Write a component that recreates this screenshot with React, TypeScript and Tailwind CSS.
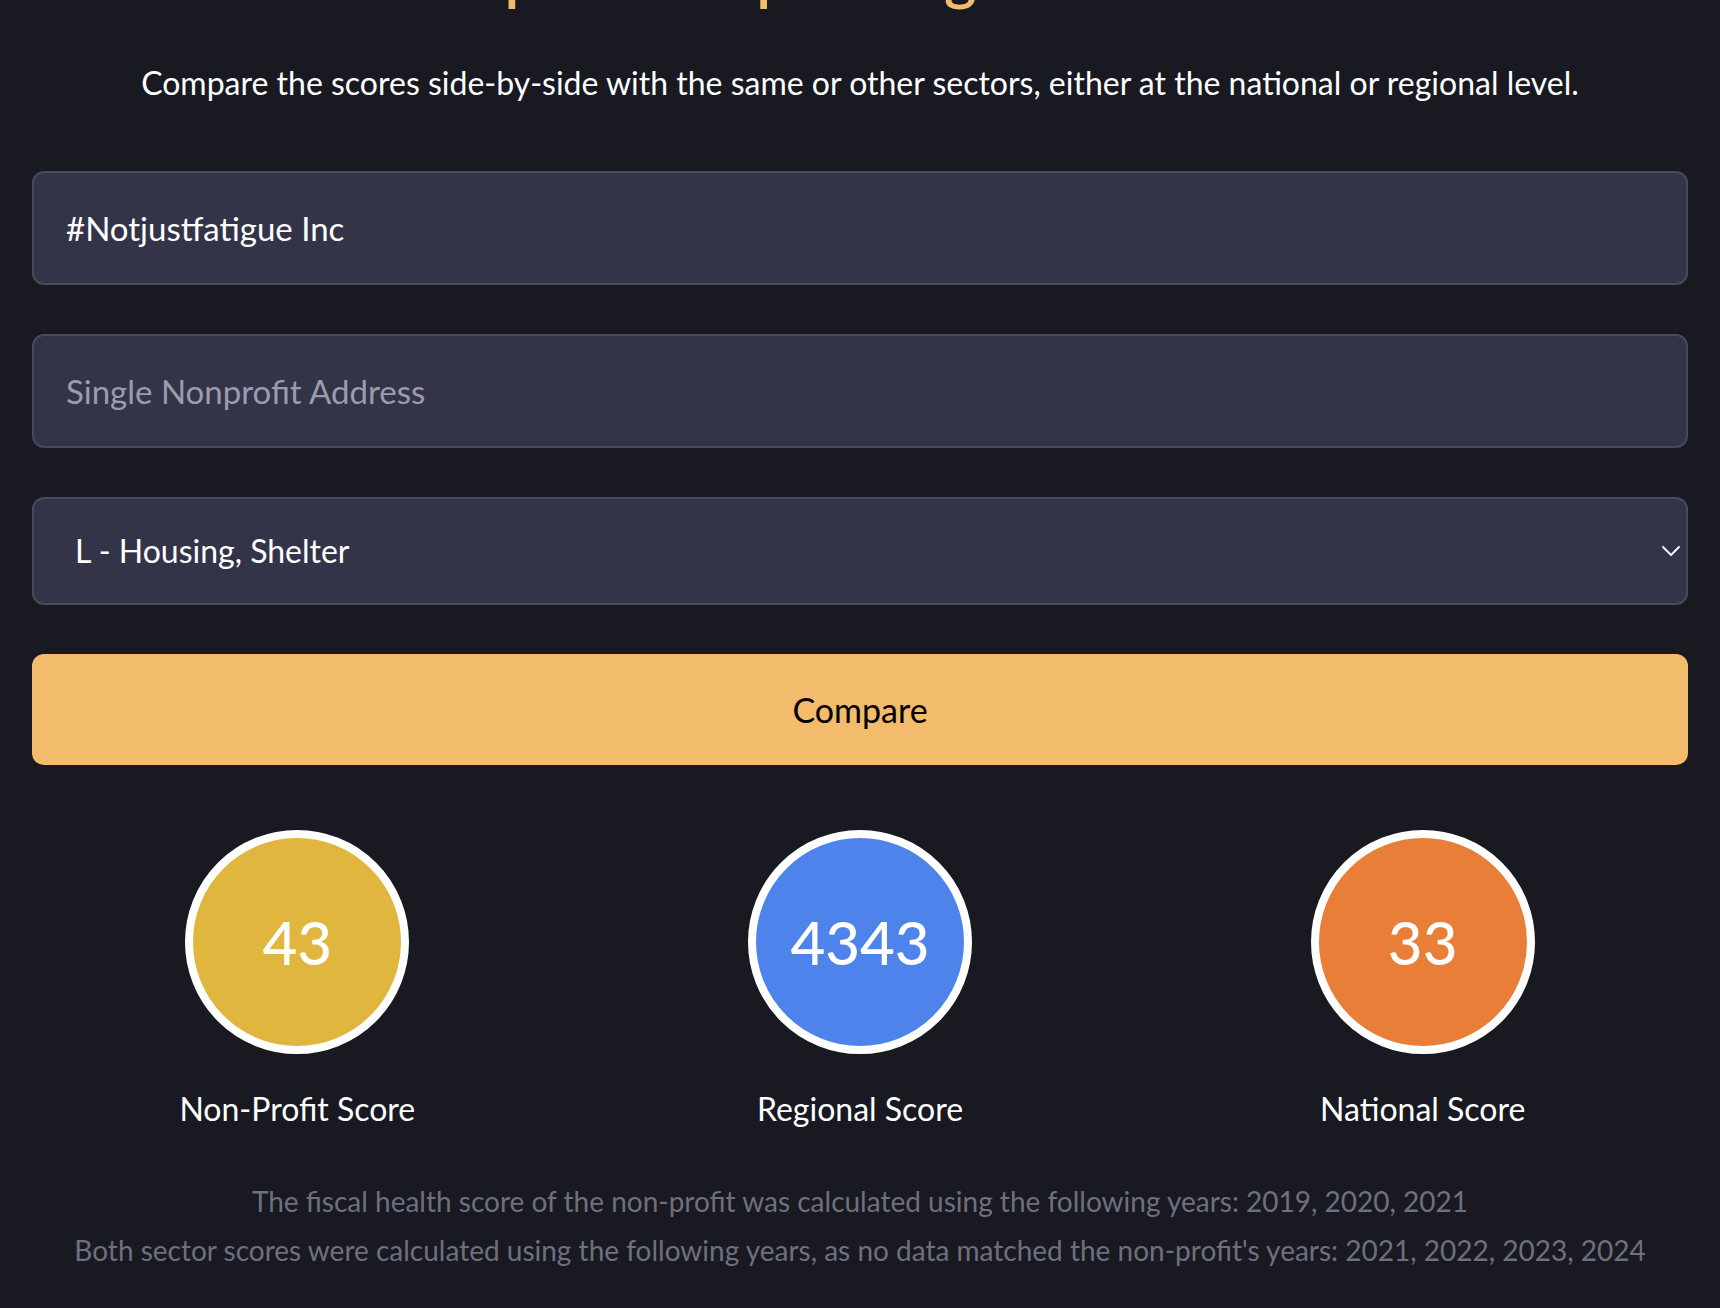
type Score = {
  value: number;
  label: string;
  color: string;
};

const scores: Score[] = [
  { value: 43, label: "Non-Profit Score", color: "bg-[#e1b63f]" },
  { value: 4343, label: "Regional Score", color: "bg-[#4f83ec]" },
  { value: 33, label: "National Score", color: "bg-[#e87e38]" },
];

function ScoreCircle({ value, label, color }: Score) {
  return (
    <div className="flex flex-col items-center">
      <div
        className={`flex h-[224px] w-[224px] items-center justify-center rounded-full border-[8px] border-white ${color}`}
      >
        <span className="text-[60px] font-medium leading-none text-white">
          {value}
        </span>
      </div>
      <p className="mt-[35px] text-[32px] leading-10 text-white">{label}</p>
    </div>
  );
}

export default function App() {
  return (
    <div className="min-h-screen overflow-hidden bg-[#191921] px-8 font-['Lato',sans-serif]">
      <h1 className="-mt-[56px] text-center text-[62px] font-semibold leading-none text-[#f3bb6c]">
        Compare Its Spending Performance
      </h1>
      <p className="mt-[57px] text-center text-[32px] leading-10 text-white">
        Compare the scores side-by-side with the same or other sectors, either at
        the national or regional level.
      </p>

      <div className="mt-[68px] flex flex-col gap-[49px]">
        <input
          type="text"
          defaultValue="#Notjustfatigue Inc"
          className="h-[114px] w-full rounded-xl border-2 border-[#464a5b] bg-[#343449] px-8 text-[33px] text-white outline-none"
        />
        <input
          type="text"
          placeholder="Single Nonprofit Address"
          className="h-[114px] w-full rounded-xl border-2 border-[#464a5b] bg-[#343449] px-8 text-[33px] text-white outline-none placeholder:text-[#9b9cae]"
        />
        <div className="relative">
          <select
            defaultValue="L"
            className="h-[108px] w-full appearance-none rounded-xl border-2 border-[#464a5b] bg-[#343449] pl-[41px] pr-12 text-[32px] text-white outline-none"
          >
            <option value="L">L - Housing, Shelter</option>
            <option value="A">A - Arts, Culture and Humanities</option>
            <option value="B">B - Education</option>
          </select>
          <svg
            viewBox="0 0 18 10"
            className="pointer-events-none absolute right-[8px] top-1/2 h-[10px] w-[18px] -translate-y-1/2 text-white"
            fill="none"
            stroke="currentColor"
            strokeWidth={1.8}
            strokeLinecap="round"
            strokeLinejoin="round"
          >
            <polyline points="1,1 9,9 17,1" />
          </svg>
        </div>
        <button className="h-[111px] w-full rounded-xl bg-[#f3bb6c] text-[34px] text-black">
          Compare
        </button>
      </div>

      <div className="mt-[65px] grid grid-cols-3 gap-8">
        {scores.map((s) => (
          <ScoreCircle key={s.label} {...s} />
        ))}
      </div>

      <div className="mt-[54px] flex flex-col gap-[13px] text-center text-[28px] leading-9 text-[#6e7080]">
        <p>
          The fiscal health score of the non-profit was calculated using the
          following years: 2019, 2020, 2021
        </p>
        <p>
          Both sector scores were calculated using the following years, as no
          data matched the non-profit's years: 2021, 2022, 2023, 2024
        </p>
      </div>
    </div>
  );
}
